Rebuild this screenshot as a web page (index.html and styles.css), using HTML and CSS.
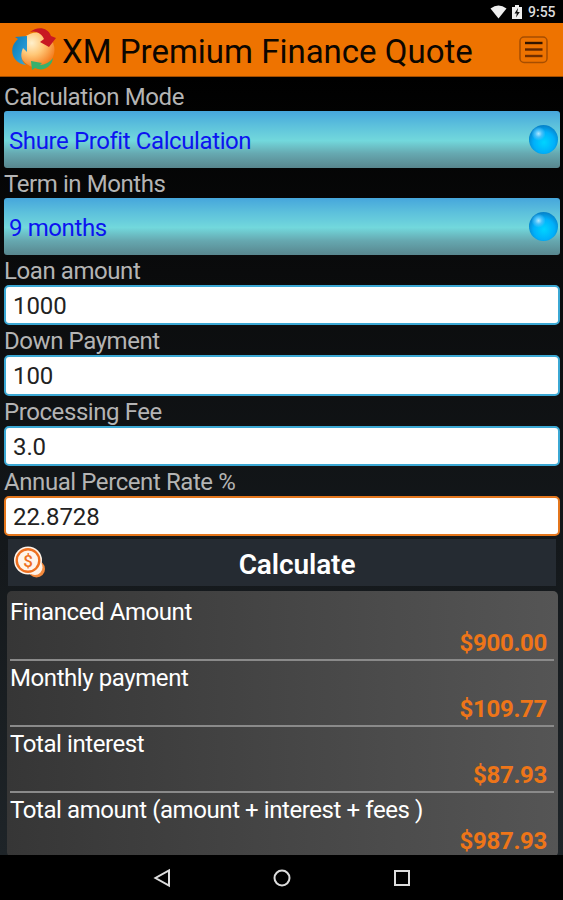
FILE: index.html
```html
<!DOCTYPE html>
<html lang="en">
  <head>
    <meta charset="UTF-8">
    <meta name="viewport" content="width=device-width, initial-scale=1.0">
    <title>XM Premium Finance Quote</title>
    <link rel="stylesheet" href="styles.css">
  </head>
  <body>
    <div class="status">
      <svg width="17" height="14" viewBox="0 0 17 14"><path d="M0.5 3.5Q8.500-2.500 16.500 3.500L8.500 13.500Z" fill="#eee"/></svg>
      <svg class="battery" width="10" height="14" viewBox="0 0 10 14"><path d="M0 2H3V0H7V2H10V14H0Z" fill="#eee"/><path d="M6 3L2.500 8.500H4.800L4 12.500L7.800 7H5.400Z" fill="#111"/></svg>
      <span class="time">9:55</span>
    </div>

    <header class="header">
      <svg class="logo" width="46" height="46" viewBox="0 0 46 46">
        <defs>
          <radialGradient id="ball" cx="0.35" cy="0.3" r="0.75">
            <stop offset="0" stop-color="#fff0cc"/>
            <stop offset="0.45" stop-color="#ffc878"/>
            <stop offset="1" stop-color="#f47718"/>
          </radialGradient>
          <linearGradient id="blue" x1="0" y1="0" x2="1" y2="1">
            <stop offset="0" stop-color="#0878b4"/>
            <stop offset="0.6" stop-color="#2296d2"/>
            <stop offset="1" stop-color="#48a8c8"/>
          </linearGradient>
        </defs>
        <circle cx="26" cy="23" r="17.500" fill="url(#ball)"/>
        <path d="M4 10L16 9L16 25L12 21C9 28 10 34 15 38C5 37 -1 28 2 19C3 16 5 14 7 12Z" fill="url(#blue)"/>
        <path d="M19 5C26-1 37 0 40 9L45 11L38 20L29 15L33 12C31 7 25 3 19 5Z" fill="#c81822"/>
        <path d="M20 34L31 36L29 38C34 38 39 35 42 31C41 40 32 45 24 41L21 43Z" fill="#38b06c"/>
      </svg>
      <h1 class="title">XM Premium Finance Quote</h1>
      <svg class="menu" width="29" height="28" viewBox="0 0 29 28">
        <rect x="1" y="1" width="27" height="25.500" rx="4" fill="none" stroke="#a64e00" stroke-width="1.500"/>
        <path d="M6 7H23.500" stroke="#301400" stroke-width="2.400"/>
        <path d="M6 13.500H23.500" stroke="#602700" stroke-width="2.400"/>
        <path d="M6 20H23.500" stroke="#702e00" stroke-width="2.400"/>
      </svg>
    </header>

    <main class="content">
      <div class="field">
        <div class="label">Calculation Mode</div>
        <div class="select">
          <span>Shure Profit Calculation</span>
          <i class="orb"></i>
        </div>
      </div>
      <div class="field">
        <div class="label">Term in Months</div>
        <div class="select">
          <span>9 months</span>
          <i class="orb"></i>
        </div>
      </div>
      <div class="field">
        <label class="label" for="loan">Loan amount</label>
        <input class="input" type="text" id="loan" value="1000">
      </div>
      <div class="field">
        <label class="label" for="down">Down Payment</label>
        <input class="input" type="text" id="down" value="100">
      </div>
      <div class="field">
        <label class="label" for="fee">Processing Fee</label>
        <input class="input" type="text" id="fee" value="3.0">
      </div>
      <div class="field">
        <label class="label" for="rate">Annual Percent Rate %</label>
        <input class="input active" type="text" id="rate" value="22.8728">
      </div>

      <button class="calculate">
        <svg class="coins" width="34" height="34" viewBox="0 0 34 34">
          <circle cx="23.500" cy="23" r="8.500" fill="#f58a3c"/>
          <circle cx="22" cy="21.500" r="7.500" fill="#fff0e4"/>
          <circle cx="15" cy="14.500" r="14" fill="#fff4ea"/>
          <circle cx="15" cy="14.500" r="11.300" fill="none" stroke="#ee7020" stroke-width="2.400"/>
          <text x="15" y="20.500" text-anchor="middle" class="dollar">$</text>
        </svg>
        <span class="caption">Calculate</span>
      </button>

      <div class="results">
        <div class="row">
          <div class="name">Financed Amount</div>
          <div class="value">$900.00</div>
        </div>
        <div class="row">
          <div class="name">Monthly payment</div>
          <div class="value">$109.77</div>
        </div>
        <div class="row">
          <div class="name">Total interest</div>
          <div class="value">$87.93</div>
        </div>
        <div class="row">
          <div class="name">Total amount (amount + interest + fees )</div>
          <div class="value">$987.93</div>
        </div>
      </div>
    </main>

    <nav class="nav">
      <svg width="18" height="20" viewBox="0 0 18 20"><path d="M16 2.500V17.500L2.500 10Z" fill="none" stroke="#ddd" stroke-width="2"/></svg>
      <svg width="18" height="20" viewBox="0 0 18 20"><circle cx="9" cy="10" r="7.500" fill="none" stroke="#ddd" stroke-width="2"/></svg>
      <svg width="18" height="20" viewBox="0 0 18 20"><rect x="2" y="3" width="14" height="14" fill="none" stroke="#ddd" stroke-width="2"/></svg>
    </nav>
  </body>
</html>
```

FILE: styles.css
```css
* {
  box-sizing: border-box;
}
body {
  margin: 0;
  width: 563px;
  height: 900px;
  overflow: hidden;
  display: flex;
  flex-direction: column;
  background: #000;
  color: #fff;
  font-family: Roboto, "Liberation Sans", sans-serif;
}
.status {
  height: 23px;
  display: flex;
  align-items: center;
  justify-content: flex-end;
  padding: 1px 7px 0 0;
}
.battery {
  margin: 0 6px 0 5px;
}
.time {
  width: 28px;
  font-size: 14px;
  font-weight: 500;
  line-height: 20px;
  color: #ddd;
}
.header {
  height: 54px;
  flex: none;
  display: flex;
  align-items: center;
  padding: 0 15px 0 11px;
  background: #ee7300;
  border-bottom: 1px solid #a04c00;
}
.logo {
  flex: none;
}
.title {
  flex: 1;
  margin: 5px 0 0 5px;
  font-size: 33px;
  font-weight: 400;
  line-height: 40px;
  color: #0c0600;
  white-space: nowrap;
}
.content {
  height: 778px;
  flex: none;
  padding: 4px 3px 0 4px;
  overflow: hidden;
  background: linear-gradient(#000, #0a0b0c 25%, #14181b 60%, #1e2428);
}
.label {
  display: block;
  height: 30px;
  padding-top: 1px;
  font-size: 24px;
  line-height: 30px;
  letter-spacing: -0.42px;
  color: #b4b4b4;
  white-space: nowrap;
}
.select {
  height: 57px;
  display: flex;
  align-items: center;
  justify-content: space-between;
  padding: 2px 0 0 5px;
  border-radius: 3px;
  background: linear-gradient(#46a6dc, #5cc0dc 25%, #72d8dc 52%, #66a8b0 75%, #58868e);
  color: #0c14f0;
  font-size: 24px;
  letter-spacing: -0.4px;
}
.orb {
  width: 29px;
  height: 29px;
  margin: 0 2px 3px 0;
  border-radius: 50%;
  background: radial-gradient(circle at 33% 30%, #b0e8ff 0, #48c0fa 12%, transparent 25%), radial-gradient(circle at 52% 60%, #00d4ff 0, #00b0fa 45%, #0684cc 72%);
}
.input {
  display: block;
  width: 100%;
  height: 40.300px;
  padding: 2px 7px 0;
  border: 2px solid #3ba8d4;
  border-radius: 5px;
  outline: none;
  background: #fff;
  color: #222;
  font-family: inherit;
  font-size: 24px;
  letter-spacing: -0.1px;
}
.active {
  border-color: #e4761c;
}
.calculate {
  width: 548px;
  height: 47px;
  display: flex;
  align-items: center;
  margin: 3px 0 5px 4px;
  padding: 0 0 0 5px;
  border: none;
  background: #252b32;
  color: #fff;
  font-family: inherit;
  font-size: 28px;
  font-weight: 600;
}
.coins {
  flex: none;
}
.caption {
  flex: 1;
  padding: 3px 9px 0 0;
  text-align: center;
  letter-spacing: -0.1px;
}
.dollar {
  font-size: 17px;
  font-weight: 500;
  fill: #ee7020;
}
.results {
  height: 266px;
  margin: 0 2px 0 3px;
  padding: 4px 4px 0 3px;
  border-radius: 5px;
  background: linear-gradient(90deg, #363636, #555);
}
.row {
  height: 66px;
  border-bottom: 2px solid #8a8a8a;
}
.name {
  height: 33px;
  font-size: 24px;
  line-height: 35px;
  letter-spacing: -0.42px;
  white-space: nowrap;
}
.value {
  padding-right: 7px;
  font-size: 24px;
  font-weight: 700;
  line-height: 30px;
  letter-spacing: -0.3px;
  text-align: right;
  color: #ee7518;
}
.nav {
  height: 45px;
  flex: none;
  display: flex;
  align-items: center;
  justify-content: center;
  gap: 102px;
  background: #000;
}
```
